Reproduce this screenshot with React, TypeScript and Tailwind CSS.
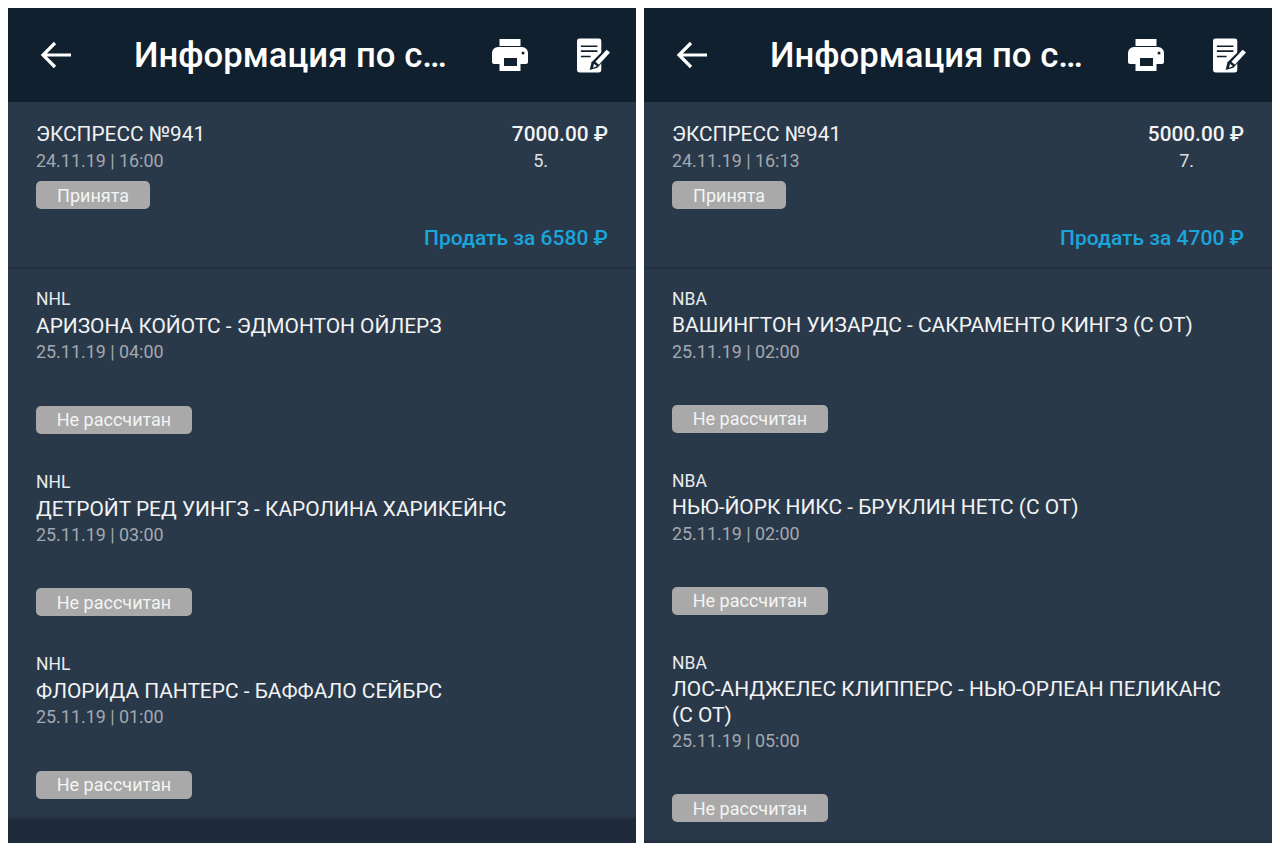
const left = {
  date: "24.11.19 | 16:00",
  amount: "7000.00 ₽",
  coef: "5.",
  coefClass: "mr-[60px]",
  badgeGap: "mt-[41.500px]",
  itemClass: "pt-[17px] pb-[1px] [&+&]:pt-[34px]",
  titleClass: "leading-[26px]",
  sell: "Продать за 6580 ₽",
  events: [
    { league: "NHL", title: "АРИЗОНА КОЙОТС - ЭДМОНТОН ОЙЛЕРЗ", time: "25.11.19 | 04:00" },
    { league: "NHL", title: "ДЕТРОЙТ РЕД УИНГЗ - КАРОЛИНА ХАРИКЕЙНС", time: "25.11.19 | 03:00" },
    { league: "NHL", title: "ФЛОРИДА ПАНТЕРС - БАФФАЛО СЕЙБРС", time: "25.11.19 | 01:00" },
  ],
};

const right = {
  date: "24.11.19 | 16:13",
  amount: "5000.00 ₽",
  coef: "7.",
  coefClass: "mr-[50px]",
  badgeGap: "mt-[41px]",
  itemClass: "pt-[17px] pb-[1px] [&+&]:pt-[34.500px]",
  titleClass: "leading-[25.500px]",
  sell: "Продать за 4700 ₽",
  events: [
    { league: "NBA", title: "ВАШИНГТОН УИЗАРДС - САКРАМЕНТО КИНГЗ (С ОТ)", time: "25.11.19 | 02:00" },
    { league: "NBA", title: "НЬЮ-ЙОРК НИКС - БРУКЛИН НЕТС (С ОТ)", time: "25.11.19 | 02:00" },
    { league: "NBA", title: "ЛОС-АНДЖЕЛЕС КЛИППЕРС - НЬЮ-ОРЛЕАН ПЕЛИКАНС (С ОТ)", time: "25.11.19 | 05:00" },
  ],
};

function PrintIcon() {
  return (
    <svg width="36" height="32" viewBox="0 0 36 32" fill="white" className="shrink-0">
      <rect x="7.500" y="0" width="21" height="7" />
      <path d="M6 8h24a6 6 0 0 1 6 6v9a2 2 0 0 1-2 2h-5.500v7h-21v-7H2a2 2 0 0 1-2-2v-9a6 6 0 0 1 6-6z" />
      <rect x="12" y="19" width="13" height="8" fill="#11202e" />
      <circle cx="31" cy="14" r="1.500" fill="#11202e" />
    </svg>
  );
}

function NoteIcon() {
  return (
    <svg width="34" height="35" viewBox="0 0 35 35" className="shrink-0">
      <rect x="0" y="0" width="25" height="35" rx="2.500" fill="white" />
      <path d="M4 8h17M4 13h17M4 18.500h10" stroke="#11202e" strokeWidth="1.600" />
      <path d="M30.500 9L36 13.500 21 30l-8 2.500 2-8z" fill="#11202e" />
      <path d="M30.500 11.500L34 14.500 22.500 27 19 24z" fill="white" />
      <path d="M17.500 26l3 2.500-4 1.500z" fill="white" />
    </svg>
  );
}

function Badge({ text, width }: { text: string; width: string }) {
  return (
    <div className={`flex h-[28px] items-center justify-center rounded-[5px] bg-[#a9a9a9] text-[18px] text-[#f4f4f4] ${width}`}>
      {text}
    </div>
  );
}

function Panel({ data }: { data: typeof left }) {
  return (
    <div className="flex w-[628px] flex-col bg-[#1f2b3a]">
      <div className="flex h-[94px] shrink-0 items-center bg-[#11202e] pr-[25px] pl-[32px]">
        <svg width="32" height="28" viewBox="0 0 32 28" fill="none" stroke="white" strokeWidth="3.200" className="shrink-0">
          <path d="M31 14H3M15 2L3 14l12 12" />
        </svg>
        <div className="ml-[62px] w-[330px] shrink-0 text-[34.700px] font-medium whitespace-nowrap text-white">
          Информация по с…
        </div>
        <div className="ml-[28px] flex items-center gap-[49px]">
          <PrintIcon />
          <NoteIcon />
        </div>
      </div>

      <div className="h-[167px] shrink-0 border-b-2 border-[#253140] bg-[#2a394a] pt-[20px] pr-[28px] pl-[28px]">
        <div className="flex justify-between">
          <div>
            <div className="text-[20.800px] leading-[25px] text-[#f2f3f4]">ЭКСПРЕСС №941</div>
            <div className="mt-[1px] text-[17.900px] leading-[25px] text-[#a3a8ae]">{data.date}</div>
          </div>
          <div className="flex flex-col">
            <div className="text-right text-[20.800px] leading-[25px] font-medium text-[#f2f3f4]">{data.amount}</div>
            <div className={`mt-[1px] self-end text-[18px] leading-[25px] text-[#dfe1e3] ${data.coefClass}`}>{data.coef}</div>
          </div>
        </div>
        <div className="mt-[8px]">
          <Badge text="Принята" width="w-[114px]" />
        </div>
        <div className="mt-[17px] text-right text-[21px] leading-[25px] font-medium text-[#1ba5dd]">
          {data.sell}
        </div>
      </div>

      <div className="bg-[#2a394a] px-[28px] pb-[17px]">
        {data.events.map((ev) => (
          <div key={ev.title} className={data.itemClass}>
            <div className="text-[17.500px] leading-[27px] text-[#e8eaec]">{ev.league}</div>
            <div className={`text-[20.900px] text-[#f2f3f4] ${data.titleClass}`}>{ev.title}</div>
            <div className="text-[17.900px] leading-[25px] text-[#a3a8ae]">{ev.time}</div>
            <div className={data.badgeGap}>
              <Badge text="Не рассчитан" width="w-[156px]" />
            </div>
          </div>
        ))}
      </div>
      <div className="h-[2px] bg-[#253140]" />
    </div>
  );
}

export default function App() {
  return (
    <div className="flex h-[853px] w-[1280px] items-stretch gap-[8px] bg-white px-[8px] pt-[8px] pb-[10px] font-['Roboto',sans-serif]">
      <Panel data={left} />
      <Panel data={right} />
    </div>
  );
}
